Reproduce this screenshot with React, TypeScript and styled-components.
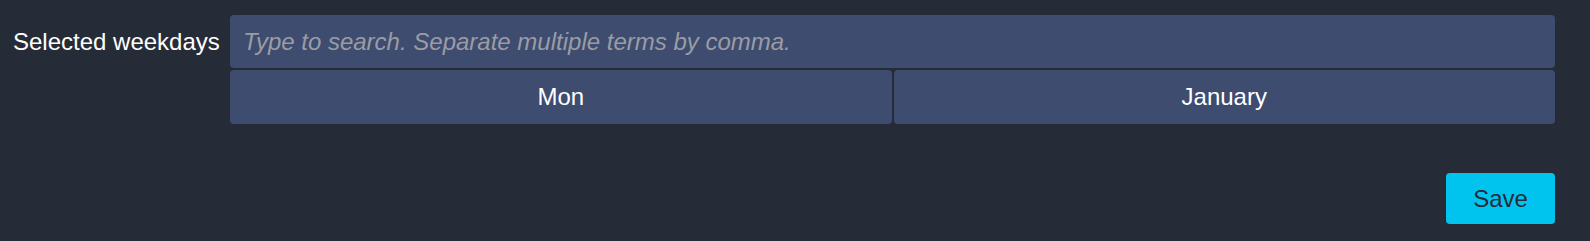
import styled, { createGlobalStyle } from 'styled-components';

const GlobalStyle = createGlobalStyle`
  html, body {
    margin: 0;
    padding: 0;
    background: #262b38;
    font-family: "Liberation Sans", Arial, sans-serif;
  }
`;

const SPage = styled.div`
  width: 1590px;
  height: 241px;
  box-sizing: border-box;
  padding: 15px 35px 0 13px;
  display: flex;
  flex-direction: column;
`;

const SRow = styled.div`
  display: grid;
  grid-template-columns: 217px 1fr;
  align-items: start;
`;

const SLabel = styled.label`
  color: #ffffff;
  font-size: 24px;
  line-height: 53px;
  white-space: nowrap;
`;

const SField = styled.div`
  display: flex;
  flex-direction: column;
  gap: 2px;
`;

const SSearch = styled.input`
  box-sizing: border-box;
  height: 53px;
  width: 100%;
  border: none;
  border-radius: 4px;
  background: #3e4c6f;
  color: #ffffff;
  font-family: "Liberation Sans", Arial, sans-serif;
  font-size: 24px;
  padding: 0 13px;
  outline: none;

  &::placeholder {
    color: #9a9ca4;
    font-style: italic;
  }
`;

const SOptions = styled.div`
  display: grid;
  grid-template-columns: 1fr 1fr;
  gap: 2px;
`;

const SOption = styled.button`
  height: 54px;
  border: none;
  border-radius: 4px;
  background: #3e4c6f;
  color: #ffffff;
  font-family: "Liberation Sans", Arial, sans-serif;
  font-size: 24px;
  cursor: pointer;
`;

const SFooter = styled.div`
  display: flex;
  justify-content: flex-end;
  margin-top: 49px;
`;

const SSave = styled.button`
  width: 109px;
  height: 51px;
  border: none;
  border-radius: 4px;
  background: #00c4ee;
  color: #262b38;
  font-family: "Liberation Sans", Arial, sans-serif;
  font-size: 24px;
  cursor: pointer;
`;

const App = () => {
  return (
    <>
      <GlobalStyle />
      <SPage>
        <SRow>
          <SLabel htmlFor="weekdays">Selected weekdays</SLabel>
          <SField>
            <SSearch
              id="weekdays"
              placeholder="Type to search. Separate multiple terms by comma."
            />
            <SOptions>
              <SOption>Mon</SOption>
              <SOption>January</SOption>
            </SOptions>
          </SField>
        </SRow>
        <SFooter>
          <SSave>Save</SSave>
        </SFooter>
      </SPage>
    </>
  );
};

export default App;
